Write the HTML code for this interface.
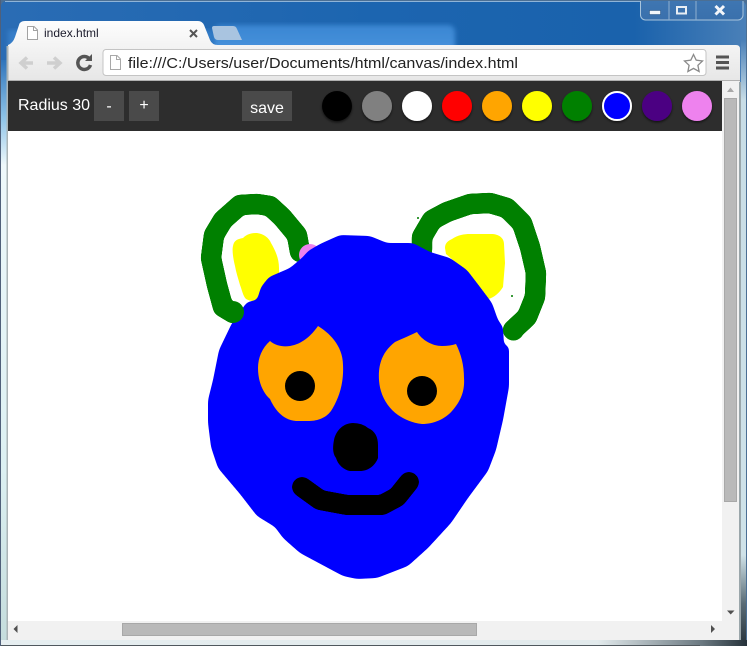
<!DOCTYPE html>
<html><head><meta charset="utf-8"><style>
html,body{margin:0;padding:0;width:747px;height:646px;overflow:hidden;background:#fff}
svg{display:block;position:absolute;left:0;top:0}
text{font-family:"Liberation Sans",sans-serif}
</style></head><body>
<svg width="747" height="646" viewBox="0 0 747 646" xmlns="http://www.w3.org/2000/svg">
<defs>
<linearGradient id="sky" x1="0" y1="0" x2="1" y2="0"><stop offset="0" stop-color="#2a6cb4"/><stop offset=".5" stop-color="#1c65b0"/><stop offset=".85" stop-color="#1a62ac"/><stop offset="1" stop-color="#4a80b8"/></linearGradient>
<linearGradient id="band" x1="0" y1="0" x2="0" y2="1"><stop offset="0" stop-color="#3a86d2"/><stop offset="1" stop-color="#4a94de"/></linearGradient>
<linearGradient id="side" x1="0" y1="0" x2="0" y2="1"><stop offset="0" stop-color="#2f74bb"/><stop offset=".1" stop-color="#8fc4e8"/><stop offset=".18" stop-color="#eef8fb"/><stop offset=".7" stop-color="#dcf0f2"/><stop offset="1" stop-color="#c4dcdc"/></linearGradient>
<linearGradient id="tool" x1="0" y1="0" x2="0" y2="1"><stop offset="0" stop-color="#fdfdfd"/><stop offset="1" stop-color="#e6e6e6"/></linearGradient>
<linearGradient id="caption" x1="0" y1="0" x2="0" y2="1"><stop offset="0" stop-color="#3e76b2"/><stop offset="1" stop-color="#3a70ac"/></linearGradient>
<linearGradient id="rstrip" x1="0" y1="0" x2="0" y2="1"><stop offset="0" stop-color="#4a80b8"/><stop offset=".1" stop-color="#c8dde6"/><stop offset=".85" stop-color="#cfe2e8"/><stop offset=".93" stop-color="#5a6c76"/><stop offset="1" stop-color="#26323a"/></linearGradient>
<linearGradient id="bstrip" x1="0" y1="0" x2="1" y2="0"><stop offset="0" stop-color="#e6eef0"/><stop offset=".8" stop-color="#e2eaec"/><stop offset=".94" stop-color="#6a7880"/><stop offset="1" stop-color="#26323a"/></linearGradient>
<filter id="sh" x="-30%" y="-30%" width="160%" height="160%"><feDropShadow dx="0" dy="1.5" stdDeviation="1.2" flood-color="#000" flood-opacity=".6"/></filter>
<filter id="blur"><feGaussianBlur stdDeviation="2.5"/></filter>
<filter id="goo" filterUnits="userSpaceOnUse" x="150" y="150" width="420" height="460" color-interpolation-filters="sRGB">
<feGaussianBlur stdDeviation="2.6"/>
<feColorMatrix type="matrix" values="1 0 0 0 0 0 1 0 0 0 0 0 1 0 0 0 0 0 14 -6.5"/>
</filter>
<filter id="goo2" filterUnits="userSpaceOnUse" x="150" y="150" width="420" height="460" color-interpolation-filters="sRGB">
<feGaussianBlur stdDeviation="1.6"/>
<feColorMatrix type="matrix" values="1 0 0 0 0 0 1 0 0 0 0 0 1 0 0 0 0 0 14 -6.5"/>
</filter>
</defs>

<!-- window frame -->
<rect x="0" y="0" width="747" height="646" fill="#4b6f94"/>
<rect x="1" y="1" width="745" height="644" rx="5" fill="url(#sky)"/>
<path d="M5 1.500H742" stroke="#8fb4d8" stroke-width="1"/>
<rect x="1" y="60" width="6" height="584" fill="url(#side)"/>
<rect x="741" y="40" width="5" height="606" fill="url(#rstrip)"/>
<rect x="214" y="25" width="241" height="30" rx="7" fill="url(#band)" filter="url(#blur)"/>
<rect x="8" y="30" width="205" height="18" fill="#3f8ad6" opacity=".6" filter="url(#blur)"/>
<rect x="1" y="640" width="746" height="6" fill="url(#bstrip)"/>
<rect x="0" y="645" width="700" height="1" fill="#50585e"/>
<rect x="0" y="0" width="1" height="646" fill="#50607a"/>

<!-- caption buttons -->
<path d="M640.500 1V15a5 5 0 0 0 5 5H738a5 5 0 0 0 5-5V1" fill="url(#caption)" stroke="#a8c4dc" stroke-width="1"/>
<path d="M669 1V20M696 1V20" stroke="#8fb0d0" stroke-width="1"/>
<rect x="649.500" y="10.500" width="11" height="4" fill="#f2f6fa" stroke="#26507e" stroke-width=".5"/>
<rect x="677" y="7" width="9" height="6.500" fill="none" stroke="#e8eef4" stroke-width="2"/>
<path d="M715.500 6L724 14.500M724 6L715.500 14.500" stroke="#f4f6fa" stroke-width="3"/>

<!-- background tab -->
<path d="M214 26H233q3 0 4 3l5 11H218q-3 0-4-3l-2-9q0-2 2-2z" fill="#a9c4e0"/>

<!-- toolbar + active tab -->
<path d="M8 45Q13 43 15 37L19 25Q20 21 25 21H198Q202 21 204 25L210 40Q212 45 218 45H736q4 0 4 4V82H8z" fill="url(#tool)"/>
<rect x="6.500" y="46" width="2" height="594" fill="#aab4b6"/>
<rect x="739" y="82" width="2" height="558" fill="#9aa6aa"/>
<rect x="8" y="80" width="732" height="1" fill="#b0b0b0"/>

<!-- tab content -->
<path d="M27.500 26.500H34l3.500 3.500V39.500H27.500z" fill="#fff" stroke="#a2a2a2"/>
<path d="M33.500 26.500V30.500H37.500" fill="none" stroke="#a2a2a2"/>
<text x="44" y="37" font-size="12" fill="#1c1c2c">index.html</text>
<path d="M190 30L197 37M197 30L190 37" stroke="#555" stroke-width="2"/>

<!-- nav buttons -->
<path d="M33 63H21M27 57.500L21 63L27 68.500" fill="none" stroke="#cfcfcf" stroke-width="3.500"/>
<path d="M47 63H60M54 57.500L60 63L54 68.500" fill="none" stroke="#cfcfcf" stroke-width="3.500"/>
<path d="M89.500 59A6.500 6.500 0 1 0 90.500 65" fill="none" stroke="#555" stroke-width="3.500"/>
<path d="M85 61H92V54z" fill="#555"/>

<!-- omnibox -->
<rect x="103" y="49.500" width="603" height="26" rx="3" fill="#fff" stroke="#c4c4c4"/>
<path d="M110.500 55.500H117l3.500 3.500V69.500H110.500z" fill="#fff" stroke="#a8a8a8"/>
<path d="M116.500 55.500V59.500H120.500" fill="none" stroke="#a8a8a8"/>
<text x="128" y="68" font-size="15" fill="#222" textLength="390" lengthAdjust="spacingAndGlyphs">file:///C:/Users/user/Documents/html/canvas/index.html</text>
<path d="M693.500 54.500l2.700 5.700 6.300.8-4.600 4.300 1.200 6.200-5.600-3.100-5.600 3.100 1.200-6.200-4.600-4.300 6.300-.8z" fill="#fff" stroke="#8a8a8a" stroke-width="1.300"/>
<path d="M716 57H729M716 62.500H729M716 68H729" stroke="#555" stroke-width="3"/>

<!-- page -->
<rect x="8" y="81" width="731" height="559" fill="#fff"/>
<rect x="8" y="81" width="714" height="50" fill="#2d2d2d"/>
<text x="18" y="110" font-size="16" fill="#fff">Radius 30</text>
<rect x="94" y="91" width="30" height="30" fill="#4a4a4a"/>
<rect x="129" y="91" width="30" height="30" fill="#4a4a4a"/>
<rect x="242" y="91" width="50" height="30" fill="#4a4a4a"/>
<text x="109" y="111" font-size="16" fill="#fff" text-anchor="middle">-</text>
<text x="144" y="110" font-size="16" fill="#fff" text-anchor="middle">+</text>
<text x="267" y="113" font-size="16" fill="#fff" text-anchor="middle">save</text>
<g filter="url(#sh)">
<circle cx="337" cy="106" r="15" fill="#000"/>
<circle cx="377" cy="106" r="15" fill="#808080"/>
<circle cx="417" cy="106" r="15" fill="#fff"/>
<circle cx="457" cy="106" r="15" fill="#f00"/>
<circle cx="497" cy="106" r="15" fill="#ffa500"/>
<circle cx="537" cy="106" r="15" fill="#ff0"/>
<circle cx="577" cy="106" r="15" fill="#008000"/>
<circle cx="617" cy="106" r="14" fill="#00f" stroke="#fff" stroke-width="2"/>
<circle cx="657" cy="106" r="15" fill="#4b0082"/>
<circle cx="697" cy="106" r="15" fill="#ee82ee"/>
</g>

<!-- drawing -->
<path d="M257 233C264 234 269 238 271 243C275 250 279 258 279 268V273L264 288L258 300C254 302 250 301 246 299C243 296 242 290 240 285C238 278 236 272 235 266C233 258 232 250 233 246C234 240 238 239 243 238C247 234 252 233 257 233Z" fill="#ff0"/>
<path d="M445 248C445 243 448 241 452 239C458 235 464 234 470 234H491C499 234 504 238 504 244L505 263L503 287C500 292 494 298 488 299L470 275L446 254Z" fill="#ff0"/>
<path filter="url(#goo2)" d="M233 313L223 307L217 285L211 258L214 235L223 220L240 205L257 204L270 206L282 217L297 235L300 252" fill="none" stroke="#008000" stroke-width="20.500" stroke-linecap="round" stroke-linejoin="round"/>
<path filter="url(#goo2)" d="M513 330L527 317L535 297L536 273L530 247L522 223L507 208L490 203L470 204L447 212L432 220L422 237V250" fill="none" stroke="#008000" stroke-width="20.500" stroke-linecap="round" stroke-linejoin="round"/>
<circle cx="310" cy="255" r="11" fill="#ee82ee"/>
<path filter="url(#goo)" d="M370 236L387 243H413L430 252L450 258L467 270L480 287L492 303L498 320L503 327L504 345L509 346V380L509 387L503 420L496 450L488 471L468 498L451 523L428 548L408 566L377 578L357 579L343 576L300 553L283 538L275 527L257 516L240 494L218 468L211 447L208 423L208 400L213 380L219 350L232 323L247 302L257 300L261 287L269 277L290 268L303 257L308 251L320 244L340 235Z" fill="#00f"/>
<circle cx="233" cy="312" r="11" fill="#008000"/>
<circle cx="513.500" cy="330" r="10.500" fill="#008000"/>
<path d="M318 326C328 332 343 345 343 365C344 385 338 400 331 411C325 419 316 421 308 421H296C282 420 274 408 270 399C262 392 258 380 258 368C258 358 262 348 270 341C276 346 283 347 290 346C302 344 311 336 318 326Z" fill="#ffa500"/>
<path d="M417 332C422 340 432 346 442 346Q450 346 456 344C461 354 464 365 464 378C465 392 460 402 452 411C445 419 434 424 422 424C412 423 404 419 398 415C387 407 380 395 379 380C378 365 382 352 395 342C404 338 411 335 417 332Z" fill="#ffa500"/>
<circle cx="300" cy="386" r="15" fill="#000"/>
<circle cx="422" cy="391" r="15" fill="#000"/>
<path d="M353 423Q362 423 368 428C375 431 378 437 378 445V458C375 466 368 471 360 471H350C344 470 338 465 336 458C332 453 333 445 334 440C336 430 344 423 353 423Z" fill="#000"/>
<path filter="url(#goo2)" d="M302 487L320 500L347 505H382L397 497L409 482" fill="none" stroke="#000" stroke-width="20" stroke-linecap="round" stroke-linejoin="round"/>
<rect x="417" y="217" width="2" height="2" fill="#3a9a3a"/>
<rect x="511" y="295" width="2" height="2" fill="#3a9a3a"/>

<!-- scrollbars -->
<rect x="722" y="81" width="17" height="559" fill="#f1f1f1"/>
<rect x="8" y="621" width="731" height="19" fill="#f1f1f1"/>
<rect x="724.500" y="98.500" width="12" height="403" fill="#b9b9b9" stroke="#a8a8a8"/>
<rect x="122.500" y="623.500" width="354" height="12" fill="#b9b9b9" stroke="#a8a8a8"/>
<path d="M727 92L730.500 87.500L734 92z" fill="#a8a8a8"/>
<path d="M727 610.500H734.500L730.700 614.500z" fill="#505050"/>
<path d="M17.500 625V633L13.500 629z" fill="#505050"/>
<path d="M711 625V633L715 629z" fill="#505050"/>
</svg>
</body></html>
